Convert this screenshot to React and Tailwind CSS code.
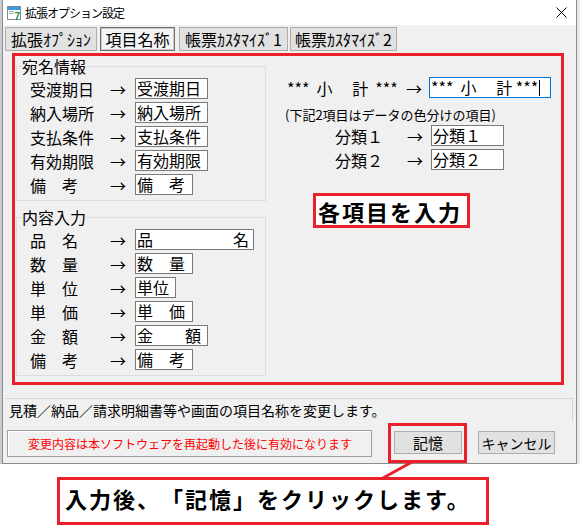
import React from "react";

const atenaRows = [
  { label: "受渡期日", value: "受渡期日", w: "w-[73px]" },
  { label: "納入場所", value: "納入場所", w: "w-[73px]" },
  { label: "支払条件", value: "支払条件", w: "w-[73px]" },
  { label: "有効期限", value: "有効期限", w: "w-[73px]" },
  { label: "備　考", value: "備　考", w: "w-[58px]" },
];

const naiyoRows = [
  { label: "品　名", value: "品　　　　　名", w: "w-[119px]" },
  { label: "数　量", value: "数　量", w: "w-[58px]" },
  { label: "単　位", value: "単位", w: "w-[41px]" },
  { label: "単　価", value: "単　価", w: "w-[58px]" },
  { label: "金　額", value: "金　　額", w: "w-[73px]" },
  { label: "備　考", value: "備　考", w: "w-[58px]" },
];

const tabs = [
  { label: "拡張ｵﾌﾟｼｮﾝ", cls: "w-[92px]" },
  { label: "項目名称", cls: "ml-[3px] w-[75px]", active: true },
  { label: "帳票ｶｽﾀﾏｲｽﾞ1", cls: "ml-[4px] w-[109px]" },
  { label: "帳票ｶｽﾀﾏｲｽﾞ2", cls: "ml-[2px] w-[107px]" },
];

const NameRow = ({ label, value, w }) => (
  <div className="flex h-[21px] items-center">
    <span className="w-[80px] whitespace-pre leading-[20px]">{label}</span>
    <span className="w-[25px] leading-[20px]">→</span>
    <div
      className={`${w} h-[21px] whitespace-pre border border-[#7a7a7a] bg-white pl-[1px] leading-[19px]`}
    >
      {value}
    </div>
  </div>
);

const Group = ({ title, rows, className }) => (
  <fieldset className={`w-[250px] border border-[#dcdcdc] pb-[5px] ${className}`}>
    <legend className="ml-[5px] text-[16px] leading-[18px]">{title}</legend>
    <div className="flex flex-col gap-[3px] pl-[13px] pt-[3px]">
      {rows.map((r) => (
        <NameRow key={r.label + r.value} {...r} />
      ))}
    </div>
  </fieldset>
);

const TitleIcon = () => (
  <svg width="16" height="16" viewBox="0 0 16 16">
    <rect x="1.5" y="1.5" width="13" height="13" fill="#fff" stroke="#7d8c99" />
    <rect x="2" y="2" width="12" height="3" fill="#3c9be0" />
    <rect x="3" y="6" width="5" height="1" fill="#9fb3c4" />
    <rect x="3" y="8" width="5" height="1" fill="#9fb3c4" />
    <text x="8.5" y="14.5" fontSize="10" fontWeight="bold" fill="#1f8a3c" fontFamily="Liberation Sans, sans-serif">
      7
    </text>
  </svg>
);

export default function App() {
  return (
    <div className="relative h-[531px] w-[580px] overflow-hidden bg-white font-['Noto_Sans_CJK_JP','Liberation_Sans',sans-serif] text-[16px] text-black [text-spacing-trim:space-all]">
      <div className="flex h-[464px]">
        <div className="w-[2px] bg-[#c9ccd1]" />
        <div className="flex w-[575px] flex-col border-x border-b border-[#8c8c8c] bg-[#f0f0f0]">
          {/* title bar */}
          <div className="flex h-[25px] items-center bg-white pl-[3px]">
            <TitleIcon />
            <span className="ml-[3px] text-[12px] leading-none tracking-[-1px]">拡張オプション設定</span>
            <svg className="ml-auto mr-[9px]" width="11" height="11" viewBox="0 0 11 11">
              <path d="M0.5 0.5L10.5 10.5M10.5 0.5L0.5 10.5" stroke="#000" strokeWidth="1" />
            </svg>
          </div>

          {/* tabs */}
          <div className="flex pl-[2px] pt-[2px]">
            {tabs.map((t) => (
              <div
                key={t.label}
                className={`${t.cls} flex h-[24px] items-center justify-center whitespace-pre leading-none ${
                  t.active
                    ? "border border-[#6f6f6f] bg-[#f4f4f4] shadow-[inset_0_0_0_1px_#c8c8c8]"
                    : "border border-[#adadad] bg-[#e1e1e1]"
                }`}
              >
                {t.label}
              </div>
            ))}
          </div>

          {/* annotated area */}
          <div className="ml-[9px] mt-[2px] flex h-[332px] w-[552px] border-[3px] border-[#e8212a]">
            <div className="ml-[1px] flex w-[250px] flex-col">
              <Group title="宛名情報" rows={atenaRows} className="mt-[1px]" />
              <Group title="内容入力" rows={naiyoRows} className="mt-[7px]" />
            </div>

            <div className="ml-[19px] flex flex-col">
              <div className="mt-[21px] flex h-[21px] items-center">
                <span className="w-[121px] whitespace-pre pl-[2px] leading-[20px]">{"***  小　 計  ***"}</span>
                <span className="w-[23px] leading-[20px]">→</span>
                <div className="flex h-[21px] w-[122px] items-center whitespace-pre border border-[#0078d7] bg-white pl-[1px] leading-[19px]">
                  {"***  小　 計 ***"}
                  <span className="ml-[1px] h-[16px] w-px bg-black" />
                </div>
              </div>
              <p className="mt-[9px] text-[13px] leading-[16px]">(下記2項目はデータの色分けの項目)</p>
              {["分類１", "分類２"].map((c, i) => (
                <div key={c} className={`${i === 0 ? "mt-[2px]" : "mt-[3px]"} flex h-[21px] items-center`}>
                  <span className="w-[122px] pl-[50px] leading-[20px]">{c}</span>
                  <span className="w-[24px] leading-[20px]">→</span>
                  <div className="h-[21px] w-[73px] border border-[#7a7a7a] bg-white pl-[1px] leading-[19px]">{c}</div>
                </div>
              ))}
              <div className="ml-[28px] mt-[23px] flex h-[35px] w-[157px] items-center border-[3px] border-[#e8212a] bg-white pl-[2px] text-[22px] font-bold leading-none tracking-[2px]">
                各項目を入力
              </div>
            </div>
          </div>

          {/* status text */}
          <div className="ml-[2px] mt-[13px] h-[24px] w-[568px] border-r border-t border-[#d6d6d6] pl-[4px] text-[14px] leading-[23px]">
            見積／納品／請求明細書等や画面の項目名称を変更します。
          </div>

          {/* bottom row */}
          <div className="mt-[1px] flex items-start">
            <div className="ml-[4px] mt-[7px] flex h-[27px] w-[365px] items-center border border-[#a0a0a0] pl-[20px] text-[12px] leading-none text-[#ff0000] shadow-[inset_1px_1px_0_#ffffff]">
              変更内容は本ソフトウェアを再起動した後に有効になります
            </div>
            <div className="ml-[16px] h-[40px] w-[79px] border-[3px] border-[#e8212a]">
              <button
                type="button"
                className="ml-[3px] mt-[5px] flex h-[23px] w-[68px] items-center justify-center border border-[#adadad] bg-[#e1e1e1] text-[15px] leading-none"
              >
                記憶
              </button>
            </div>
            <button
              type="button"
              className="ml-[11px] mt-[8px] flex h-[23px] w-[77px] items-center justify-center border border-[#adadad] bg-[#e1e1e1] text-[14px] leading-none"
            >
              キャンセル
            </button>
          </div>
        </div>
        <div className="flex-1 bg-[#e9e9e9]" />
      </div>

      {/* callout */}
      <div className="ml-[57px] mt-[13px] h-[48px] w-[432px] border-[3px] border-[#e8212a] bg-white pl-[5px] pt-[3px] text-[22px] font-bold leading-[30px] tracking-[2px]">
        入力後、「記憶」をクリックします。
      </div>

      <svg className="pointer-events-none absolute left-0 top-0" width="580" height="531">
        <line x1="412" y1="462" x2="383" y2="478" stroke="#e8212a" strokeWidth="3" />
      </svg>
    </div>
  );
}
